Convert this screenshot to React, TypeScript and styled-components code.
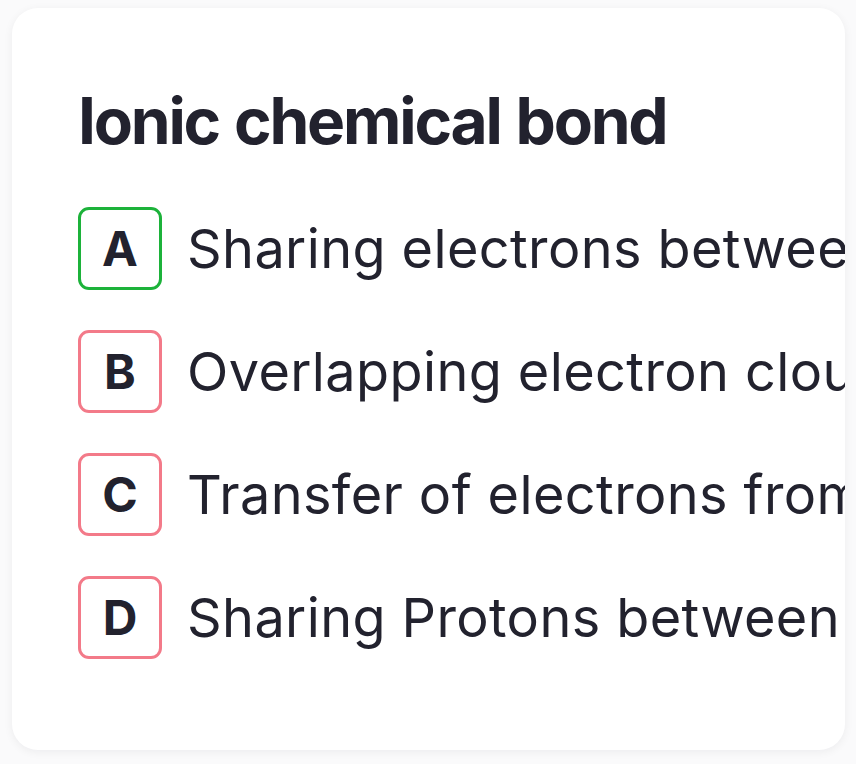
import React from "react";
import styled, { createGlobalStyle } from "styled-components";

const Global = createGlobalStyle`
  html, body { margin: 0; padding: 0; background: #fafafb; }
  body { font-family: Inter, "Noto Sans", sans-serif; }
`;

const Page = styled.div`
  width: 856px;
  height: 764px;
  padding: 8px 11px 14px 12px;
  box-sizing: border-box;
`;

const Card = styled.div`
  height: 742px;
  background: #ffffff;
  border-radius: 26px;
  box-shadow: 0 2px 10px rgba(20, 20, 40, 0.06);
  overflow: hidden;
  padding: 75px 0 0 66px;
  box-sizing: border-box;
`;

const Title = styled.h1`
  margin: 0 0 48px 0;
  font-size: 64px;
  font-weight: 700;
  letter-spacing: -2.2px;
  word-spacing: 2px;
  line-height: 76px;
  color: #22222e;
  white-space: nowrap;
`;

const List = styled.div`
  display: flex;
  flex-direction: column;
  gap: 40px;
`;

const Row = styled.div`
  display: flex;
  align-items: center;
  gap: 25px;
  white-space: nowrap;
`;

const Letter = styled.div<{ $correct?: boolean }>`
  flex: 0 0 auto;
  width: 84px;
  height: 83px;
  box-sizing: border-box;
  border: 3.5px solid ${(p) => (p.$correct ? "#1cb23a" : "#f37a89")};
  border-radius: 11px;
  display: flex;
  align-items: center;
  justify-content: center;
  font-size: 48px;
  font-weight: 700;
  color: #22222e;
`;

const Answer = styled.span`
  font-size: 54px;
  font-weight: 400;
  letter-spacing: 0.4px;
  color: #22222e;
`;

const options = [
  { key: "A", text: "Sharing electrons between two atoms", correct: true },
  { key: "B", text: "Overlapping electron clouds", correct: false },
  { key: "C", text: "Transfer of electrons from one atom to another", correct: false },
  { key: "D", text: "Sharing Protons between atoms", correct: false },
];

export default function App() {
  return (
    <Page>
      <Global />
      <Card>
        <Title>Ionic chemical bond</Title>
        <List>
          {options.map((o) => (
            <Row key={o.key}>
              <Letter $correct={o.correct}>{o.key}</Letter>
              <Answer>{o.text}</Answer>
            </Row>
          ))}
        </List>
      </Card>
    </Page>
  );
}
